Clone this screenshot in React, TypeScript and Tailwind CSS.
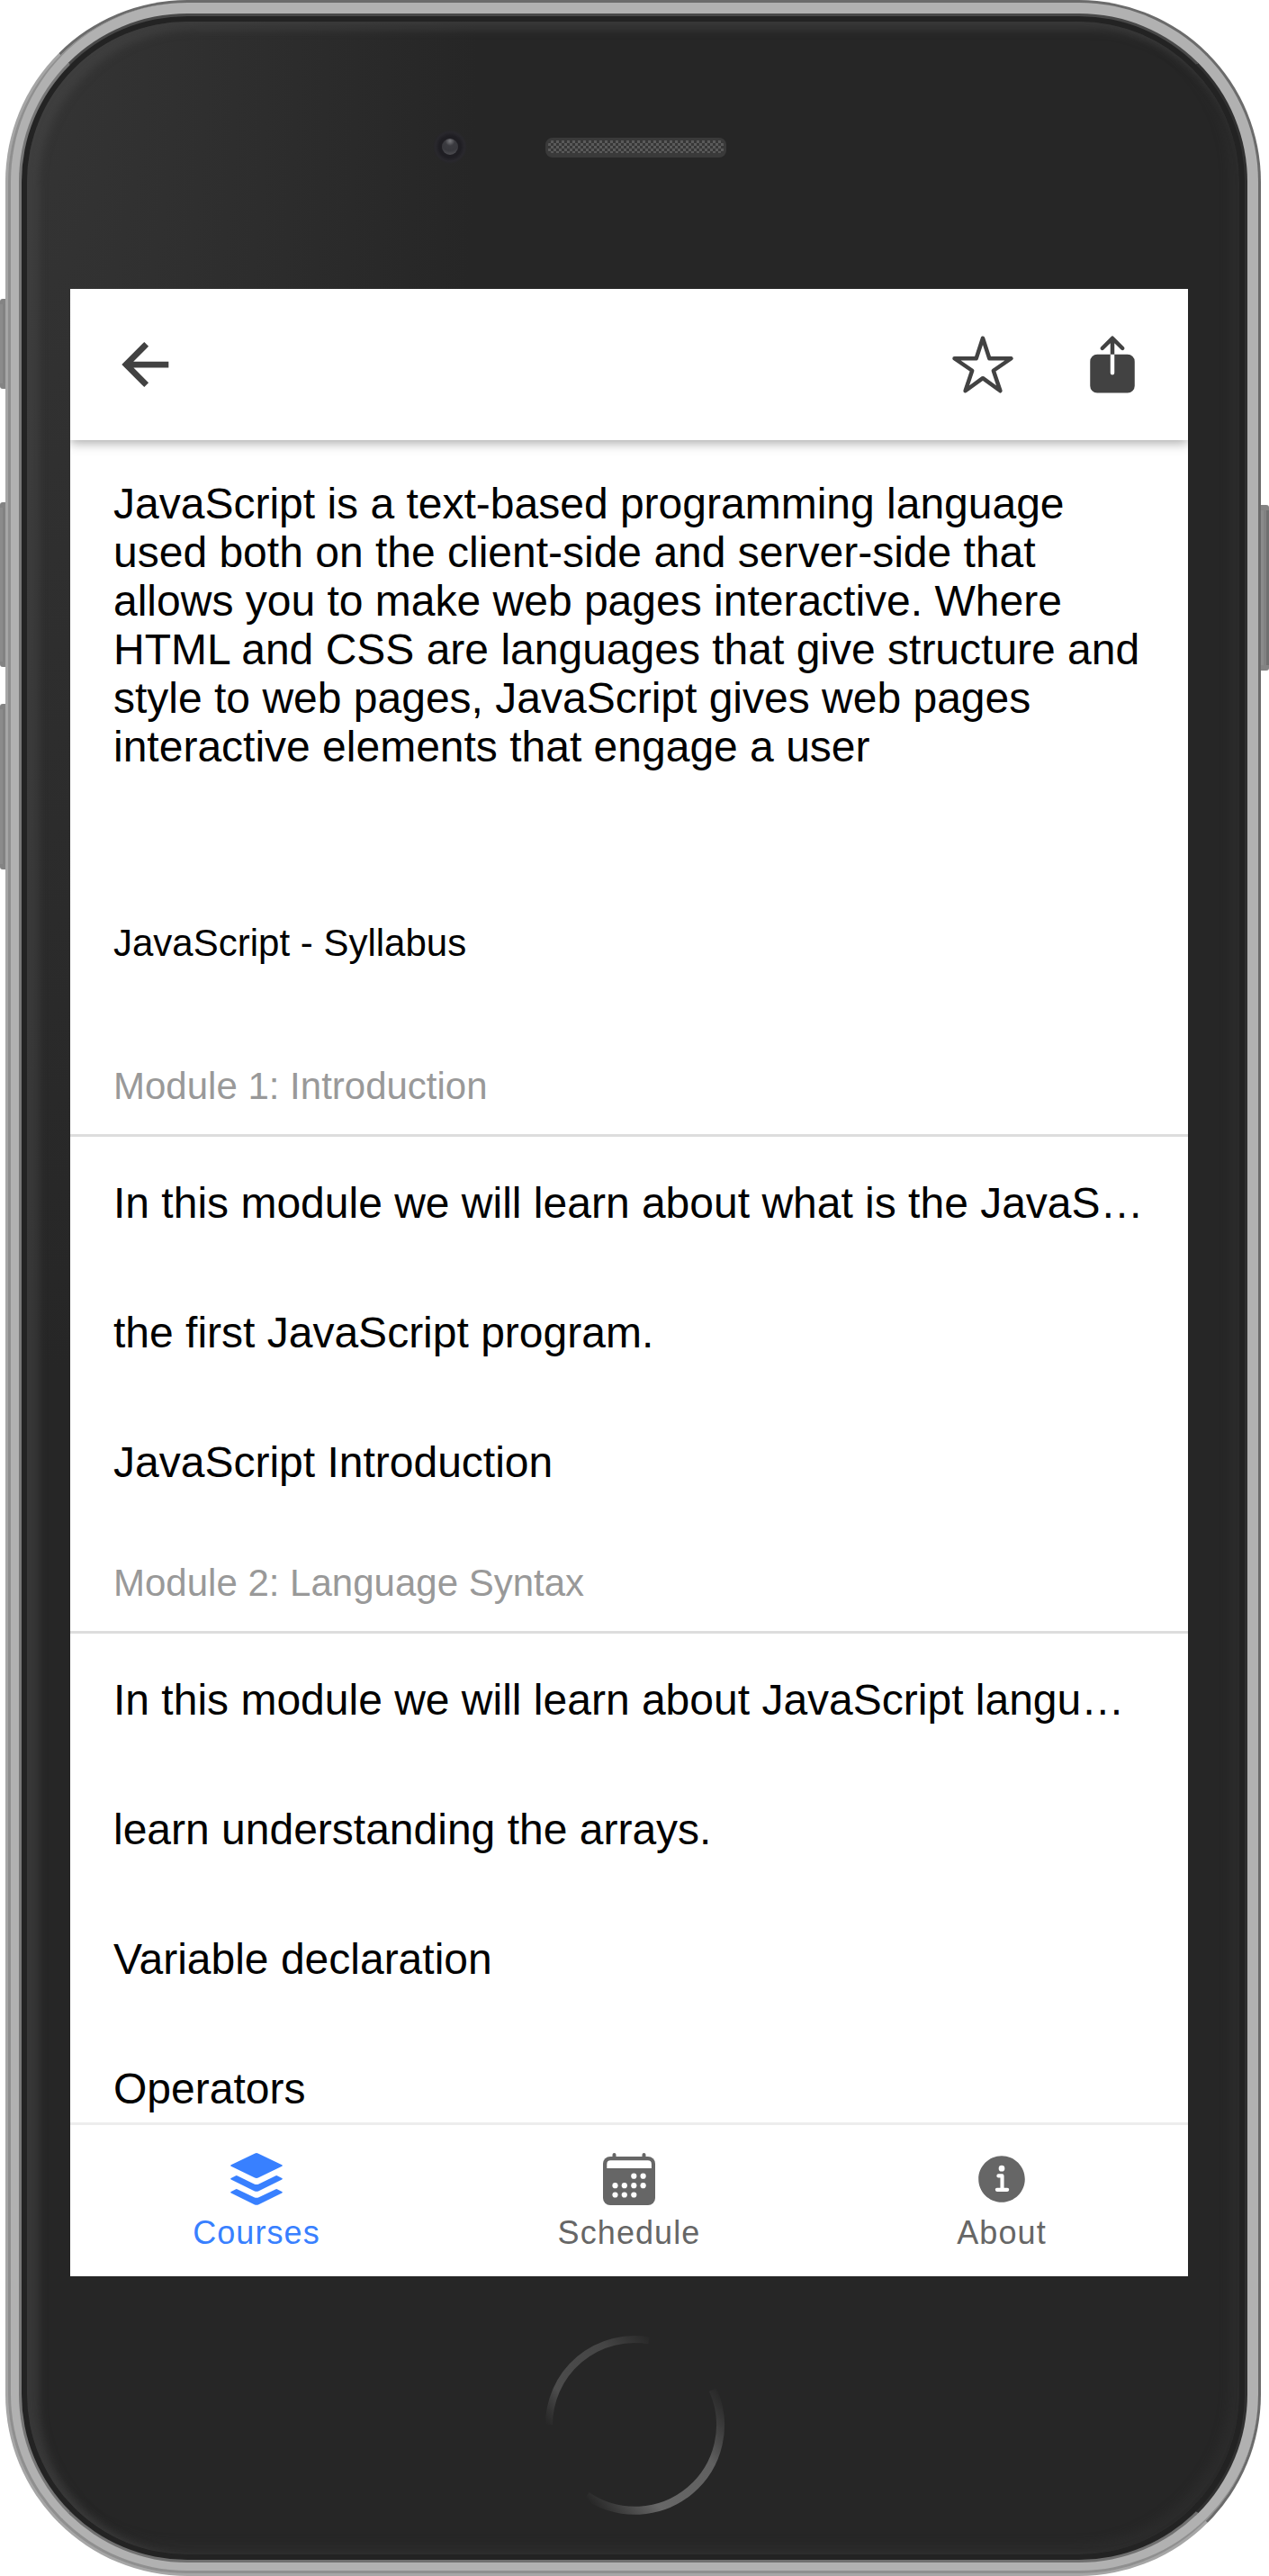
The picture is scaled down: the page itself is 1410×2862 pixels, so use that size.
import { IoArrowBackSharp, IoInformationCircle, IoShare, IoStarOutline } from "react-icons/io5";

const modules = [
  {
    title: "Module 1: Introduction",
    items: [
      "In this module we will learn about what is the JavaS…",
      "the first JavaScript program.",
      "JavaScript Introduction",
    ],
  },
  {
    title: "Module 2: Language Syntax",
    items: [
      "In this module we will learn about JavaScript langu…",
      "learn understanding the arrays.",
      "Variable declaration",
      "Operators",
    ],
  },
];

const calendarDots = [
  [38.3, 29.7],
  [48.6, 29.7],
  [17.5, 40.2],
  [27.8, 40.2],
  [38.3, 40.2],
  [48.6, 40.2],
  [17.5, 50.5],
  [27.8, 50.5],
  [38.3, 50.5],
];

function LayersIcon({ className }: { className: string }) {
  return (
    <svg className={className} viewBox="0 0 66 66" fill="currentColor">
      <path d="M31.3 4.5Q33 3.6 34.7 4.5L61.3 17.3Q62.6 18 61.3 18.8L35.5 31.2Q33 32.6 30.5 31.2L4.7 18.8Q3.4 18 4.7 17.3Z" />
      <path d="M4.7 32L9.6 29.4Q10.8 28.8 12 29.4L30.4 38.4Q33 39.7 35.6 38.4L54 29.4Q55.2 28.8 56.4 29.4L61.3 32Q62.6 32.7 61.3 33.5L35.5 46.2Q33 47.4 30.5 46.2L4.7 33.5Q3.4 32.7 4.7 32Z" />
      <path d="M4.7 47L9.6 44.4Q10.8 43.8 12 44.4L30.4 53.2Q33 54.5 35.6 53.2L54 44.4Q55.2 43.8 56.4 44.4L61.3 47Q62.6 47.7 61.3 48.5L35.5 61.2Q33 62.4 30.5 61.2L4.7 48.5Q3.4 47.7 4.7 47Z" />
    </svg>
  );
}

function CalendarIcon({ className }: { className: string }) {
  return (
    <svg className={className} viewBox="0 0 66 66" fill="currentColor">
      <path d="M16.5 10V6M49.5 10V6" stroke="currentColor" strokeWidth="4" strokeLinecap="round" />
      <rect x="4" y="8" width="58" height="54" rx="8" />
      <path d="M8.3 21V16.4Q8.3 12.3 12.4 12.3H53.8Q57.9 12.3 57.9 16.4V21Z" fill="white" />
      {calendarDots.map(([cx, cy]) => (
        <circle key={`${cx}-${cy}`} cx={cx} cy={cy} r="3.1" fill="white" />
      ))}
    </svg>
  );
}

const tabs = [
  { label: "Courses", Icon: LayersIcon, color: "text-[#3880ff]" },
  { label: "Schedule", Icon: CalendarIcon, color: "text-[#666666]" },
  { label: "About", Icon: IoInformationCircle, color: "text-[#666666]" },
];

function SideButton({ className }: { className: string }) {
  return (
    <div
      className={`absolute w-[9px] border-y-[6px] border-[#838383] bg-[linear-gradient(90deg,#8b8b8b_0_3px,#828282_3px_6px,#707070_6px)] ${className}`}
    />
  );
}

function Bezel() {
  return (
    <>
      <SideButton className="left-0 top-[332px] h-[100px] rounded-l-[3px]" />
      <SideButton className="left-0 top-[558px] h-[183px] rounded-l-[3px]" />
      <SideButton className="left-0 top-[782px] h-[184px] rounded-l-[3px]" />
      <SideButton className="right-0 top-[561px] h-[184px] rounded-r-[3px]" />
      <div className="absolute inset-y-0 left-[6px] right-[9px] rounded-[202px] border-[3px] border-b-[#a6a6a6] border-l-[#a6a6a6] border-r-[#6b6b6b] border-t-[#6b6b6b] bg-[#b1b1b1]">
        <div className="absolute inset-0 rounded-[199px] border-b-[3px] border-l-[3px] border-[#8f8f8f]" />
        <div className="absolute inset-[12px] rounded-[187px] border-[3px] border-b-[#707070] border-l-[#777777] border-r-[#303030] border-t-[#484848] bg-[#232323] p-[6px]">
          <div className="h-full rounded-[178px] bg-[radial-gradient(ellipse_500px_1500px_at_0_0,#353535,#262626)] shadow-[inset_10px_6px_10px_3px_rgba(74,74,74,0.5),inset_-8px_-8px_12px_3px_rgba(56,56,56,0.3)]" />
        </div>
      </div>
    </>
  );
}

function Speaker() {
  return (
    <div className="h-[22px] w-[201px] rounded-[8px] border-[3px] border-[#3a3a3a] border-b-[5px] bg-[#3a3a3a] bg-[conic-gradient(#5a5a5a_25%,#373737_0_50%,#5a5a5a_0_75%,#373737_0)] bg-[length:6px_6px]" />
  );
}

function Camera() {
  return (
    <div className="flex size-[38px] items-center justify-center rounded-full bg-[radial-gradient(circle,#1f1e23_45%,#29282d_60%,#262626_72%)]">
      <div className="size-[18px] rounded-full bg-[radial-gradient(circle_at_50%_15%,#77777b,#3b3b40_30%,#38383d_60%,#58585c)]" />
    </div>
  );
}

function HomeButton() {
  return (
    <svg className="size-[204px]" viewBox="0 0 204 204" fill="none">
      <defs>
        <linearGradient id="upper" x1="5" y1="103" x2="122" y2="5" gradientUnits="userSpaceOnUse">
          <stop offset="0" stopColor="#454545" stopOpacity="0" />
          <stop offset=".22" stopColor="#4c4c4c" />
          <stop offset=".7" stopColor="#454545" />
          <stop offset="1" stopColor="#454545" stopOpacity="0" />
        </linearGradient>
        <linearGradient id="lower" x1="45" y1="180" x2="194" y2="60" gradientUnits="userSpaceOnUse">
          <stop offset="0" stopColor="#676767" stopOpacity="0" />
          <stop offset=".3" stopColor="#676767" />
          <stop offset=".7" stopColor="#606060" />
          <stop offset="1" stopColor="#555555" stopOpacity="0" />
        </linearGradient>
      </defs>
      <path d="M7 102A95 95 0 0 1 118 8.4" stroke="url(#upper)" strokeWidth="8" />
      <path d="M49 180.8A95 95 0 0 0 189 63" stroke="url(#lower)" strokeWidth="9" />
    </svg>
  );
}

export default function App() {
  return (
    <div className="relative h-[2862px] w-[1410px] overflow-hidden bg-white font-['Liberation_Sans',Arial,sans-serif] text-black">
      <Bezel />
      <div className="relative flex h-full flex-col pl-[78px] pr-[90px]">
        <div className="relative h-[321px] shrink-0">
          <div className="absolute left-[403px] top-[144px]">
            <Camera />
          </div>
          <div className="absolute left-[528px] top-[153px]">
            <Speaker />
          </div>
        </div>

        <main className="flex h-[2208px] shrink-0 flex-col overflow-hidden bg-white">
          <header className="relative flex h-[168px] shrink-0 items-center bg-white px-12 text-[#424242] shadow-[0_3px_12px_rgba(0,0,0,0.35)]">
            <IoArrowBackSharp className="size-[72px]" />
            <IoStarOutline className="ml-auto size-[72px]" />
            <IoShare className="ml-[72px] size-[72px]" />
          </header>

          <div className="min-h-0 flex-1 overflow-hidden">
            <p className="px-12 pt-[44px] text-[48px] leading-[54px]">
              JavaScript is a text-based programming language used both on the client-side and server-side that allows
              you to make web pages interactive. Where HTML and CSS are languages that give structure and style to web
              pages, JavaScript gives web pages interactive elements that engage a user
            </p>
            <h2 className="mt-[164px] px-12 text-[42px] leading-[54px]">JavaScript - Syllabus</h2>
            <div className="mt-[68px]">
              {modules.map((module) => (
                <section key={module.title}>
                  <h3 className="flex h-[120px] items-center border-b-[3px] border-[#dddddd] px-12 pt-[10px] text-[42px] text-[#999999]">
                    {module.title}
                  </h3>
                  <ul>
                    {module.items.map((item) => (
                      <li
                        key={item}
                        className="flex h-36 items-center whitespace-nowrap px-12 pt-[3px] text-[48px] leading-[58px]"
                      >
                        {item}
                      </li>
                    ))}
                  </ul>
                </section>
              ))}
            </div>
          </div>

          <nav className="relative grid h-[171px] shrink-0 grid-cols-3 border-t-[3px] border-[#ededed] bg-white">
            {tabs.map(({ label, Icon, color }) => (
              <div key={label} className={`flex flex-col items-center pt-[27px] ${color}`}>
                <Icon className="size-[66px]" />
                <span className="mt-[6px] text-[36px] leading-[42px] tracking-[0.03em]">{label}</span>
              </div>
            ))}
          </nav>
        </main>

        <div className="flex flex-1 justify-center pl-[11px] pt-[63px]">
          <HomeButton />
        </div>
      </div>
    </div>
  );
}
